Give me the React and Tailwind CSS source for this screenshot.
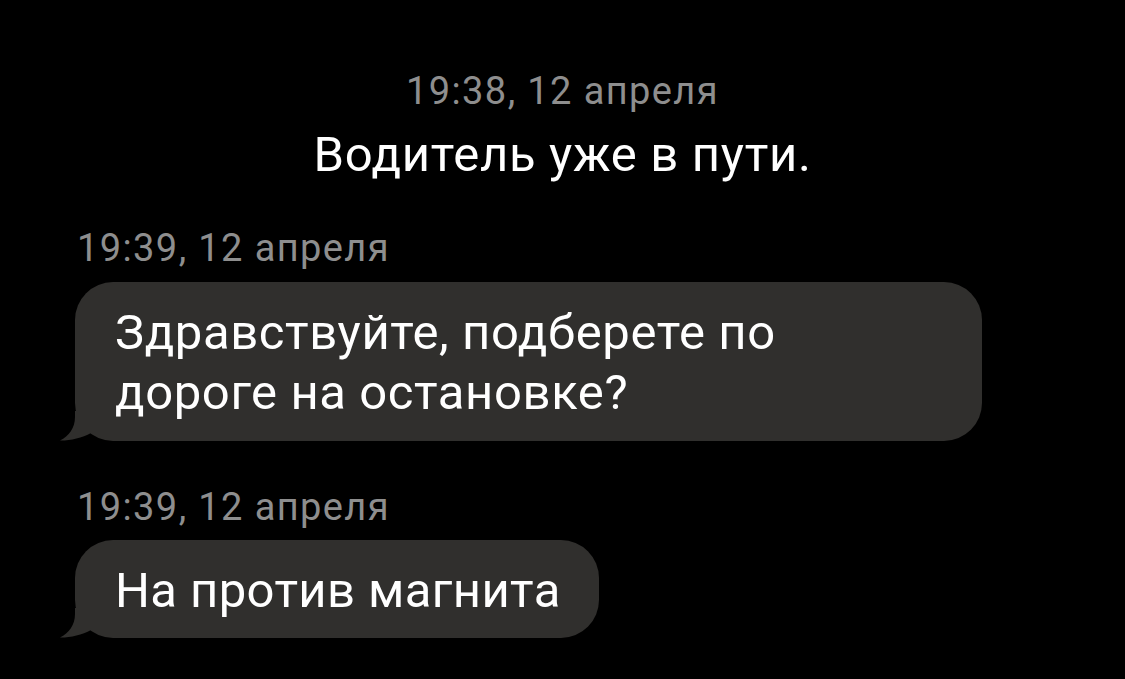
import React from "react";

function Tail() {
  return (
    <svg
      className="absolute left-[-15px] bottom-0"
      width="40"
      height="30"
      viewBox="0 0 40 30"
    >
      <path
        d="M15,0 L15,6 C15,17 9,25 0,29.6 C10,29.8 22,27 31,22 L31,0 Z"
        fill="#302f2d"
      />
    </svg>
  );
}

export default function App() {
  return (
    <div
      className="w-[1125px] h-[679px] bg-black overflow-hidden"
      style={{ fontFamily: "Roboto, 'Noto Sans', sans-serif" }}
    >
      <div className="flex flex-col items-center pt-[69px]">
        <div className="text-[38px] leading-[44px] tracking-[1.4px] text-[#8e8e8e]">19:38, 12 апреля</div>
        <div className="mt-[13px] text-[49px] leading-[58px] tracking-[0.7px] text-white">Водитель уже в пути.</div>
      </div>
      <div className="pl-[75px] mt-[42px] flex flex-col items-start">
        <div className="ml-[2px] text-[38px] leading-[44px] tracking-[1.4px] text-[#8e8e8e]">19:39, 12 апреля</div>
        <div className="relative mt-[12px] w-[907px] rounded-[38px] bg-[#302f2d] px-[40px] pt-[21px] pb-[18px] text-[49px] leading-[60px] tracking-[0.6px] text-white">
          <Tail />
          <span className="relative">Здравствуйте, подберете по<br />дороге на остановке?</span>
        </div>
        <div className="ml-[2px] mt-[44px] text-[38px] leading-[44px] tracking-[1.4px] text-[#8e8e8e]">19:39, 12 апреля</div>
        <div className="relative mt-[11px] rounded-[38px] bg-[#302f2d] pl-[40px] pr-[38px] pt-[21px] pb-[17px] text-[49px] leading-[60px] tracking-[0.4px] text-white">
          <Tail />
          <span className="relative">На против магнита</span>
        </div>
      </div>
    </div>
  );
}
